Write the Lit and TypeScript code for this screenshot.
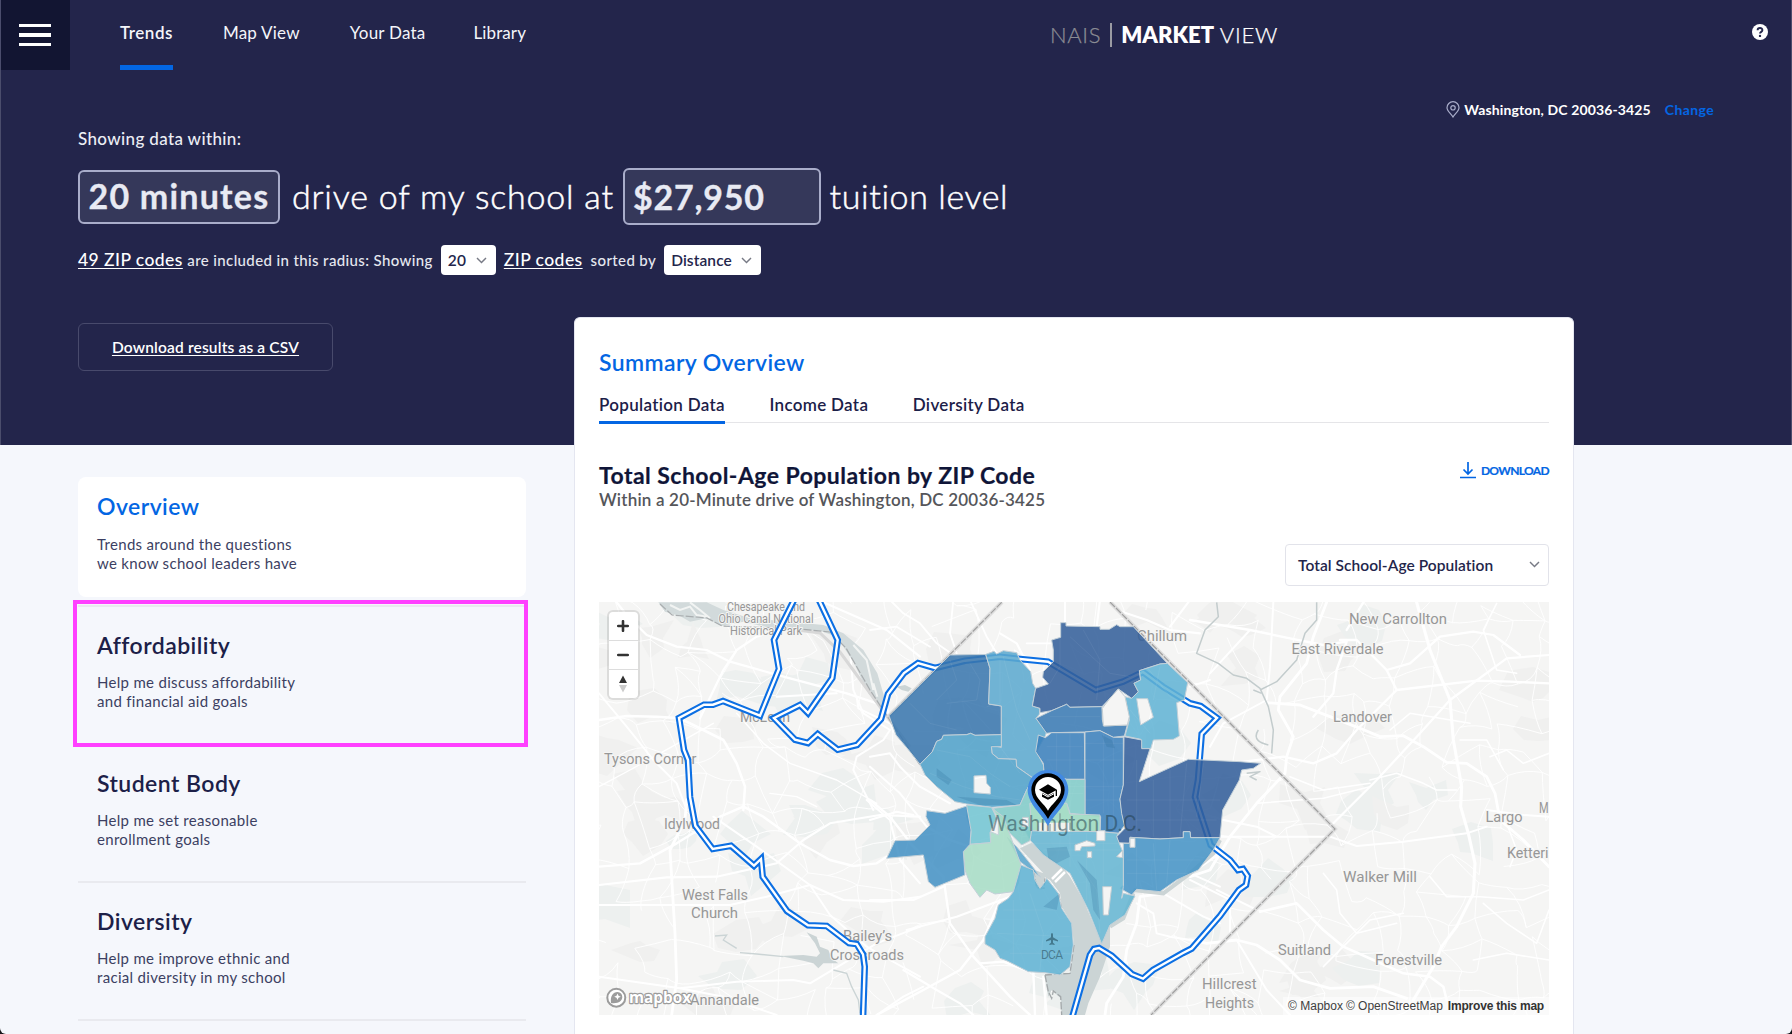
import { LitElement, html, css, svg } from "lit";
import { customElement } from "lit/decorators.js";

const chevron = html`<svg class="chev" width="11" height="7" viewBox="0 0 11 7"><path d="M1 1l4.5 4.6L10 1" fill="none" stroke="#777a85" stroke-width="1.4"/></svg>`;

/* ---------- map ---------- */

// Street grid: a jittered lattice with random gaps, stable between renders.
function streets(): string {
  let s = 77;
  const rnd = () => ((s = (s * 16807) % 2147483647) / 2147483647);
  const step = 27;
  const cols = Math.ceil(950 / step) + 2;
  const rows = Math.ceil(413 / step) + 2;
  const pts: [number, number][][] = [];
  for (let r = 0; r < rows; r++) {
    pts.push([]);
    for (let c = 0; c < cols; c++) {
      pts[r].push([590 + c * step + (rnd() - 0.5) * 24, 594 + r * step + (rnd() - 0.5) * 24]);
    }
  }
  let d = "";
  const seg = (a: [number, number], b: [number, number]) => {
    const mx = (a[0] + b[0]) / 2 + (rnd() - 0.5) * 12;
    const my = (a[1] + b[1]) / 2 + (rnd() - 0.5) * 12;
    d += `M${a[0].toFixed(1)} ${a[1].toFixed(1)}Q${mx.toFixed(1)} ${my.toFixed(1)} ${b[0].toFixed(1)} ${b[1].toFixed(1)}`;
  };
  for (let r = 0; r < rows; r++)
    for (let c = 0; c < cols; c++) {
      if (c + 1 < cols && rnd() < 0.66) seg(pts[r][c], pts[r][c + 1]);
      if (r + 1 < rows && rnd() < 0.66) seg(pts[r][c], pts[r + 1][c]);
      if (r + 1 < rows && c + 1 < cols && rnd() < 0.06) seg(pts[r][c], pts[r + 1][c + 1]);
    }
  return d;
}
const STREETS = streets();

// Soft terrain patches.
function patches() {
  let s = 991;
  const rnd = () => ((s = (s * 16807) % 2147483647) / 2147483647);
  return Array.from({ length: 80 }, () => {
    const x = 600 + rnd() * 950, y = 602 + rnd() * 413;
    let p = "";
    for (let i = 0; i < 8; i++) {
      const a = (i / 8) * 6.283, r = 6 + rnd() * 22;
      p += `${(x + Math.cos(a) * r * 1.3).toFixed(0)},${(y + Math.sin(a) * r).toFixed(0)} `;
    }
    return svg`<polygon points=${p} fill=${rnd() > 0.6 ? "#edf0ef" : "#f0f0ef"}/>`;
  });
}

const ISO = [
  "M795 598 774 640 779 669 760 715.7 723 701 713 704.7 704 704.7 679 718 684 750 688 760 690 797 695.3 825.7 712.7 849 731 845.7 754 865.7 761 859 762.7 876.7 787 911 808 925.3 826.7 926 849 943 856.7 944 863 954.3 864.7 966.7 863 1018",
  "M818 598 837.7 640 832.3 678 808 713 800 705 774 718 795 739.7 808 743 817.7 734 837.7 749.7 857 745 881 719 888 694 904 673 918 663 935 668 965 660.7 1000 656.7 1020 659 1048 661.7 1095.7 690 1123 681.7 1143 672 1163 686.7 1190 703.3 1200.7 706 1217 718 1201.7 734 1198 780 1195 797 1210.7 845 1230 860 1238 870 1243 869 1247.7 876 1246 885 1239 890 1220 916 1191.7 948.5 1183 953 1153 970 1143 978.7 1131.7 974 1111.7 955.7 1099 948 1094 949 1090 955 1072 1018",
];

// ZIP areas, drawn at three units per pixel from (870, 600).
const AREAS: [string, string][] = [
  ["#3a76ae", "M57 347 240 165 347 163 360 205 356 312 394 318V404L315 406 302 400 290 404 220 406 215 418 200 424 187 455 150 493 120 455 78 405Z"],
  ["#5ca9cf", "M347 163 372 154 380 162 400 152 440 158 450 180 482 215 488 250 497 265 487 318 510 325 508 343 498 355 530 395 526 408 500 455 522 498 520 535 490 535 440 500 438 478 385 476 366 460 364 436 394 442V318L356 312 360 205Z"],
  ["#345f9a", "M572 68H588V78L690 80V88H718L740 74 750 80H790L892 190 870 192 808 212 812 240 792 250 805 275 785 295 745 267 720 295 696 320 600 322 590 313 545 332 510 338 510 325 487 318 497 265 535 252 518 232 520 215 550 185V150L545 120 572 112Z"],
  ["#3a7ab3", "M498 355 545 332 590 313 600 322 696 320 697 360 702 378 772 375 763 408 730 412 690 392 645 396 545 398 530 400Z"],
  ["#62b3d4", "M892 190 953 248 943 300 920 308 928 408 910 418 850 420 842 446H815L813 418 765 408 778 360 765 290 785 295 805 275 792 250 812 240 808 212 870 192ZM800 296 812 375 850 352 833 296Z"],
  ["#3b80bb", "M545 398H643L645 538H590L522 515 520 490 497 455 505 405 526 413Z"],
  ["#3b80bb", "M645 396 690 392 730 412H760V555L750 598 757 645 765 675 745 700 690 695 692 650 645 645Z"],
  ["#325e9a", "M762 410 815 420V446H840L808 545 955 478 1110 485 1172 490 1150 505 1115 510 1108 540 1058 630 1050 713H962L960 695H940V713L870 717 780 712 778 730 745 728 740 710 765 685 755 640 750 597 760 555Z"],
  ["#4593c5", "M1050 713 1030 750 985 810 920 840 870 875 800 868 785 885 750 865 760 855V730H778L780 712 870 717 940 713V695H960L962 713Z"],
  ["#65b6d2", "M465 692 690 695 745 700 740 710 760 760V860L755 895 760 880 795 888 765 945 720 975 695 1032 655 930 600 820 520 765 480 720Z"],
  ["#5aa5cc", "M412 712 440 740 480 790 512 832 470 800 450 785Z"],
  ["#4fa1c9", "M150 493 187 455 200 424 215 418 220 406 290 404 302 400 315 406 394 404V440L364 440 366 460 385 476 438 478 440 500 490 535 470 570 450 615 365 622 290 612 255 605 200 560 165 525ZM312 528V578L361 582V562L350 550 348 526Z"],
  ["#7fcac8", "M490 535 590 538H645V645L600 640 590 610 480 610 485 692 480 722 455 735 410 690 370 625 450 615 470 570Z"],
  ["#9bd9c0", "M480 610H590L600 642 690 645V695L485 692Z"],
  ["#72c4d2", "M290 615 365 622 380 655 360 698 362 728 300 733 303 695 290 650Z"],
  ["#a6dcc6", "M300 733 362 728 362 695 385 705 385 655 366 625 400 650 453 795 445 850 430 875 375 882 350 870 330 892 300 850 285 810 280 755Z"],
  ["#4592c4", "M170 632 225 640 290 618 303 690 300 733 280 755 285 825 195 862 175 845 160 765 50 775 75 722 135 720 180 675 168 650Z"],
  ["#5fb2d3", "M453 795 490 810 495 840 510 865 525 845 530 835 565 880 575 925 605 970 610 1035 600 1100 570 1125 525 1118 475 1115 410 1082 390 1075 375 1050 345 1032V1010L375 955 385 915 415 895 430 875Z"],
];

// Larger roads: [origin x, origin y, width, path], three units per pixel.
const ROADS: [number, number, number, string][] = [
  [590, 590, 3.2, "M80 37 110 75 170 135 260 170 350 180 420 215 600 265 770 310 890 350 910 425"],
  [590, 590, 3.6, "M27 390 110 378 200 380 270 385 340 420 400 450 440 520 465 590 460 660"],
  [590, 590, 3.2, "M700 37 890 120 990 200M330 385 400 240 440 180 500 140 560 120"],
  [590, 590, 2.8, "M27 310 110 410 190 510 260 580 290 660M800 320 805 355 900 400M560 320 740 310"],
  [590, 590, 2.8, "M780 180 790 300 820 370 900 420 880 450 800 500 790 540 850 660"],
  [590, 590, 2, "M540 610 620 620 680 650M440 370 520 460 600 520 740 570 860 640M27 590 120 540 300 440 370 400"],
  [590, 800, 4, "M290 0 285 60 240 150 255 400 260 540 245 645"],
  [590, 800, 3.4, "M27 200 150 190 260 130 390 50 460 20 520 50 630 130 720 180 790 198 860 190 890 170"],
  [590, 800, 3, "M27 255 230 232 380 230 560 190 640 120 720 70 870 45 990 50"],
  [590, 800, 3, "M27 315H320L420 315 530 290 660 255 760 300 880 305 990 290"],
  [590, 800, 2.8, "M27 530 270 565 400 590 560 645M270 565 440 545 610 540 660 550 760 490 860 430 990 380"],
  [590, 800, 2.8, "M370 50 500 140 660 255 720 345 830 440 900 480 990 530M830 0 900 60 930 180 990 250"],
  [590, 800, 2.8, "M860 645 940 590 1000 560"],
  [870, 600, 2.6, "M60 0 100 40 150 70 200 130 300 200M250 0 240 100 260 160M300 0 350 110 380 160M0 90 80 80 180 140M470 130 550 130"],
  [870, 600, 3, "M390 100 440 130 480 210M585 0V70M690 0 680 80M740 30 830 60 900 90 990 100M960 0 900 80"],
  [870, 600, 3, "M0 470 60 460 90 500 150 560 240 610M0 500 90 580 170 680 240 720 300 740"],
  [870, 790, 3.4, "M0 30 60 80 130 170 220 260 240 400 310 500 420 620 480 675"],
  [870, 790, 3, "M0 90 80 65 130 75M0 330 130 330 220 290M110 420 260 380 420 320M100 540 200 600 270 640 310 675"],
  [870, 790, 3.4, "M20 675 160 600 270 540 340 450 390 330M330 520 400 515 480 545M490 545 495 675M520 560 530 675"],
  [870, 790, 4, "M1050 190 960 250 880 310 810 320 800 400 770 480 760 560 710 640 705 675"],
  [870, 790, 2.8, "M800 340 850 370 860 430 900 440 960 450M880 310 1000 380 1050 400M960 250 1050 290"],
  [1190, 590, 4.4, "M680 37 720 180 760 280 780 330 790 450 815 590 812 650 835 730 855 820 850 910 800 1010 755 1070 730 1130 670 1230"],
  [1190, 590, 4, "M770 517 830 520 890 560 915 610 930 690 1000 750 1077 830M770 517 700 470 640 437 570 440 510 415 420 380 330 345 230 338"],
  [1190, 590, 4, "M410 37 370 140 350 220 270 320 265 360 310 440 290 500 285 550 200 640 120 740 60 840 0 860"],
  [1190, 590, 3.4, "M120 520 280 500 370 520 440 490 500 420 620 300 590 240 500 150 450 150"],
  [1190, 590, 3.4, "M620 300 860 272 960 275 1077 280M0 90 180 120 300 145 400 165 470 155 440 240 430 310 370 380M520 37 470 120"],
  [1190, 590, 3.2, "M590 240 660 220 750 140 850 125 910 135 990 195M430 700 560 570 690 430 780 330 950 205 1077 195"],
  [1190, 590, 2.8, "M0 740H420L500 768 640 755 830 730 890 710M0 660 100 690 200 710 260 740M890 660 1000 675 1077 680"],
  [1190, 590, 3.6, "M210 965 320 940 400 1020 460 1070 550 1110 640 1150 720 1160 760 1190 770 1230"],
  [1190, 590, 4, "M0 1050 50 1060 140 1050 200 1065 270 1110 330 1170 420 1195 550 1190 650 1225"],
  [1190, 590, 2.8, "M140 1050 230 1200 300 1275M80 900 200 960M0 870 120 930 120 1030M60 270 0 290M180 120 60 250M250 37 240 230 230 330 100 400 60 470"],
  [1190, 590, 2.2, "M400 850 440 900 450 970 500 1030 620 1000M720 860 770 920 870 920 1000 930 1077 900M540 570 620 550 700 580 740 600 800 600M1077 490 1000 520 950 480 900 500"],
  [1190, 590, 2.2, "M400 1130 500 1030 540 990 640 970M600 420 660 370 840 400M300 560 400 600 540 580M200 640 400 625 540 590M920 40 880 120 920 240 980 250"],
  [1190, 590, 2.2, "M850 1110 950 1090 1077 1110M810 450 890 450 940 540M960 830 980 780 950 700M1077 960 1040 1060 950 1000 880 940"],
];

const LABELS: [string, number, number, number, number][] = [
  ["New Carrollton", 1349, 624, 98, 15.5], ["East Riverdale", 1291.5, 654, 92, 15.5], ["Landover", 1333, 722, 59, 15.5],
  ["Largo", 1485.5, 822, 37, 15.5], ["Walker Mill", 1343, 882, 74, 15.5], ["Suitland", 1278, 955, 53, 15.5],
  ["Forestville", 1375, 965, 67, 15.5], ["Hillcrest", 1202, 989, 54.5, 15.5], ["Heights", 1205, 1007.5, 49, 15.5],
  ["Chesapeake and", 727, 610.5, 78, 12], ["Ohio Canal National", 718.5, 622.5, 95, 12], ["Historical Park", 730, 634.5, 72, 12],
  ["McLean", 740, 721.5, 50, 15.5], ["Tysons Corner", 604, 764, 92.5, 15.5], ["Idylwood", 664, 828.5, 56, 15.5],
  ["West Falls", 682, 899.5, 66, 15.5], ["Church", 691, 918, 47, 15.5], ["Bailey’s", 843, 941, 49, 15.5],
  ["Crossroads", 830, 960, 74, 15.5], ["Annandale", 690, 1005, 69, 15.5], ["Chillum", 1137, 641, 50, 15.5],
  ["M", 1539, 813, 9.6, 15.5], ["Ketteri", 1507, 857.5, 41.5, 15.5],
];

const at = (x: number, y: number) => `translate(${x} ${y}) scale(.33333)`;

@customElement("zip-map")
export class ZipMap extends LitElement {
  static styles = css`
    :host { display: block; position: relative; height: 413px; overflow: hidden; }
    .canvas { display: block; }
    .lab { font-family: Roboto, "Liberation Sans", sans-serif; fill: #979797; paint-order: stroke; stroke: #f5f5f4; stroke-width: 2px; stroke-linejoin: round; }
    .city { font-family: Roboto, "Liberation Sans", sans-serif; fill: #1f3c48; fill-opacity: .5; }
    .ctl { position: absolute; left: 8px; top: 8px; border: 2px solid rgba(0,0,0,.1); border-radius: 6px; width: 28.5px; overflow: hidden; background: #fff; background-clip: padding-box; }
    .ctl span { display: flex; align-items: center; justify-content: center; height: 28px; }
    .ctl span + span { border-top: 1px solid #ddd; }
    .attr { position: absolute; right: 0; bottom: 0; padding: 0 5px; display: flex; gap: 3px; font: 12px/18px "Liberation Sans", Arial, sans-serif; color: #404040; background: rgba(255,255,255,.5); white-space: nowrap; }
    .attr b { color: #333; letter-spacing: -.2px; margin-left: 2px; }
    .logo { font-family: "Open Sans", sans-serif; font-weight: 700; fill: #fff; paint-order: stroke; stroke: #9c9c9c; stroke-width: 2.4px; stroke-linejoin: round; }
  `;
  render() {
    return html`
      <svg class="canvas" width="950" height="413" viewBox="599 602 950 413">
        <rect x="599" y="602" width="950" height="413" fill="#f5f5f4"/>
        ${patches()}
        <path d=${STREETS} fill="none" stroke="#fff" stroke-width="1" stroke-opacity=".9"/>
        <g fill="none" stroke="#fff" stroke-linecap="round" stroke-linejoin="round">
          ${ROADS.map(([x, y, w, d]) => svg`<path transform=${at(x, y)} d=${d} stroke-width=${w * 2.1}/>`)}
        </g>

        <g fill="#cbd4d5">
          <path transform=${at(590, 590)} d="M205 37 225 65 270 78 300 95 350 85 395 108 460 95 560 118 690 122 740 140 790 215 835 310 870 350 890 345 862 250 820 180 760 130 700 105 600 95 480 85 400 60 350 37Z" fill="#d2dadb"/>
          <path transform=${at(590, 590)} d="M240 45 270 60 300 50 320 75 350 80M300 37 330 60 360 85M790 165 830 210 850 300M850 280 862 320" fill="none" stroke="#f2f4f3" stroke-width="6"/>
          <path transform=${at(590, 590)} d="M920 290 945 285 965 295 955 305 935 300Z"/>
          <path transform=${at(590, 800)} d="M650 397 680 410 690 440 715 450 725 475 745 490 700 490 685 505 670 490 640 482 570 468 640 465 680 470 690 460 675 430Z"/>
          <path transform=${at(590, 800)} d="M375 408 410 405 400 420 440 445M450 458 500 462 580 470M730 510 770 520 785 560 805 600 810 640" fill="none" stroke="#cbd4d5" stroke-width="4"/>
          <path transform=${at(870, 790)} d="M450 175 485 158 580 235 600 260 640 330 695 460 720 405 720 470 690 560 655 640 645 675H575L572 625 545 600 535 620 525 555 600 550 612 465 605 400 575 350 570 310 540 270 525 262 515 300 500 295 490 240 455 225 520 250Z"/>
          <path transform=${at(870, 790)} d="M1050 150 1030 190 960 250 880 310 790 300M790 310 760 385 720 410" fill="none" stroke="#cbd4d5" stroke-width="12"/>
        </g>
        <path transform=${at(870, 790)} d="M525 555 535 605 545 625 550 603 572 620 575 675M612 465 600 550 525 555M490 240 500 292 522 295 525 265M565 310 575 355" fill="none" stroke="#a3a8aa" stroke-width="4" stroke-dasharray="22 6"/>
        <g fill="none" stroke="#c3cccd" stroke-width="4.5" stroke-linejoin="round">
          <path transform=${at(1190, 590)} d="M80 37 85 80 45 120 20 190 85 220 130 255 170 265 210 295 235 350 250 420 245 490M380 37V90L345 130 320 210 260 275 210 300"/>
          <path transform=${at(1190, 590)} d="M205 420C185 450 215 460 235 465M190 300 215 310M170 550 210 545 180 560 200 570"/>
        </g>
        <path d="M1052 879 1062 869M1055 882 1065 872" fill="none" stroke="#fff" stroke-width="2.5"/>
        <g fill="none">
          <path d="M910 747 886 715 840 652 820 633 797 630" stroke="#d8d8d8" stroke-width="3"/>
          <path d="M660 604 672 615 707 618 722 626 800 629 830 632 846 648 870 690 885 713 920 765" stroke="#a9adaf" stroke-width="1.2" stroke-dasharray="8 2"/>
          <path d="M889 716 1002 602M1110 602 1335 829 1151 1015" stroke="#dedede" stroke-width="4"/>
          <path d="M889 716 1002 602M1110 602 1335 829 1151 1015" stroke="#a0a0a0" stroke-width="1.2" stroke-dasharray="7 1.5"/>
        </g>

        <g>${LABELS.map(([t, x, y, w, s]) => svg`<text class="lab" x=${x} y=${y} font-size=${s} textLength=${w} lengthAdjust="spacingAndGlyphs">${t}</text>`)}</g>

        <g fill="none" stroke-linejoin="miter">
          ${ISO.map((d) => svg`<path d=${d} stroke="#0c6fe3" stroke-width="6.6"/><path d=${d} stroke="#fff" stroke-width="2.4"/>`)}
        </g>

        <g transform=${at(870, 600)} fill-rule="evenodd" stroke="#c3d0d8" stroke-width="3" stroke-linejoin="round">
          ${AREAS.map(([c, d]) => svg`<path d=${d} fill=${c} fill-opacity=".87"/>`)}
        </g>
        <g transform=${at(870, 600)} fill="none" stroke="#fff" stroke-opacity=".06" stroke-width="3">
          <path d="M390 180V310L350 320M400 170 440 330 480 420M300 190 330 240 320 300 230 310M120 310 180 370 260 390M240 180 260 240 200 300M570 90V200L540 250M640 90 690 180 680 300M600 110 720 220 780 230M540 350 690 350M560 400V530M600 400V530M530 440H640M530 480H760M645 430H760M700 400V640M730 415V690M645 560H760M645 600H750M180 520 280 560 380 590 450 600M200 450 300 470 360 520 420 560M390 440 450 520M800 480V700M850 540V710M900 510V710M950 490 930 710M770 600H1050M790 660H1040M1000 490 980 650M800 740V860M850 730 860 870M900 720 890 850M770 780H990M770 820H960M480 730H750M520 750H750M600 700V800M650 700V900M700 700V860M620 780 680 870 690 1000M430 900V1100M400 930 560 930M480 880 520 1000 510 1110M380 1000 600 1010M420 1060 600 1060M540 560H645M560 540V650M600 540V640M500 580H640M830 200 900 290 920 300M780 330 840 400M870 200 850 300"/>
        </g>
        <g transform=${at(870, 600)} fill="#2f6f9d" fill-opacity=".25">
          <path d="M200 505 245 540 235 555 200 530ZM260 590 410 600 440 615 330 615ZM695 405 725 420 735 445 710 440ZM620 780 680 840 690 960 670 930 660 850ZM530 745 590 740 600 770 560 790 535 775ZM520 920 570 880 560 930Z"/>
        </g>
        <g transform=${at(870, 600)} fill="#f5f5f4" stroke="#c3cdd2" stroke-width="3">
          <path d="M745 267 720 295 697 325 700 378 772 375 778 350 765 290Z"/>
          <path d="M680 692H705V722H680ZM780 715H795V742H780ZM652 755H665V773H652ZM615 735 650 722 675 730 675 738 635 740 630 752H615ZM740 770 757 752V773ZM698 860H725L715 945H700ZM458 652H475V680H458Z"/>
          <path d="M505 668H600V694H505Z" fill="#eef2ee" stroke="none"/><path d="M518 668V690M540 672V694M570 640V690M600 668V690" stroke="#758d8f"/>
        </g>
        <text class="city" x="988" y="830.5" font-size="21.5" textLength="154" lengthAdjust="spacingAndGlyphs">Washington D.C.</text>
        <path d="M1052 933c.8 0 1 1 1 2v2.2l5 3v1.4l-5-1.6v2.8l1.6 1.3v1l-2.6-.7-2.6.7v-1l1.6-1.3V940l-5 1.6v-1.4l5-3V935c0-1 .2-2 1-2z" fill="#44798e"/>
        <text class="city" x="1041" y="958.5" font-size="12" textLength="22">DCA</text>

        <g transform=${at(870, 600)}>
          <path d="M534 678C518 645 473 612 473 570A61 61 0 0 1 595 570C595 612 550 645 534 678Z" fill="#4189e2"/>
          <path d="M534 657C520 628 484 604 484 570A50 50 0 0 1 584 570C584 604 548 628 534 657Z" fill="#000"/>
          <path d="M534 632C524 612 495 596 495 570A39 39 0 0 1 573 570C573 596 544 612 534 632Z" fill="#fff"/>
          <path d="M507 569 534 553 561 569 534 584ZM516 578 534 588 552 578V590L534 599 516 590ZM557 570H561V588H557Z" fill="#000"/>
          <path d="M516 581 534 591 552 581" stroke="#fff" stroke-width="3" fill="none"/>
        </g>

        <circle cx="616.3" cy="997.7" r="9" fill="#fff" stroke="#9c9c9c" stroke-width="2"/>
        <path d="M611 1003c-1-7 2-11 6.500-11a5.200 5.200 0 0 1 4.800 5c0 4-4.300 7-11.300 6z" fill="#9c9c9c"/>
        <path d="M617.500 993.500l1 2.300 2.300 1-2.300 1-1 2.300-1-2.300-2.300-1 2.300-1z" fill="#fff"/>
        <text class="logo" x="629" y="1002.5" font-size="16" textLength="62" lengthAdjust="spacingAndGlyphs">mapbox</text>
      </svg>
      <div class="ctl">
        <span><svg width="12" height="12"><path d="M6 1.200V10.800M1.200 6H10.800" stroke="#333" stroke-width="2.600" stroke-linecap="round"/></svg></span>
        <span><svg width="12" height="12"><path d="M1.200 6H10.800" stroke="#333" stroke-width="2.600" stroke-linecap="round"/></svg></span>
        <span><svg width="10" height="18"><path d="M1 8 5 .5 9 8Z" fill="#333"/><path d="M1 10 5 17.500 9 10Z" fill="#ccc"/></svg></span>
      </div>
      <div class="attr"><span>© Mapbox</span><span>© OpenStreetMap</span><b>Improve this map</b></div>`;
  }
}

/* ---------- page ---------- */

const TOPICS = [
  { t: "Overview", a: "Trends around the questions", b: "we know school leaders have", on: true },
  { t: "Affordability", a: "Help me discuss affordability", b: "and financial aid goals", mark: true },
  { t: "Student Body", a: "Help me set reasonable", b: "enrollment goals" },
  { t: "Diversity", a: "Help me improve ethnic and", b: "racial diversity in my school" },
];

@customElement("app-root")
export class AppRoot extends LitElement {
  static styles = css`
    :host { display: block; width: 1792px; height: 1034px; background: #16161a; font-family: Lato, "Open Sans", sans-serif; color: #1c2048; white-space: nowrap; }
    * { box-sizing: border-box; }
    .page { height: 1034px; overflow: hidden; background: #f5f7fc; border-radius: 0 0 6px 6px; }
    .hero { height: 445px; background: #23254b; color: #fff; border-left: 1px solid #4b4d6c; border-right: 1px solid #4b4d6c; }
    header { display: flex; height: 70px; }
    .burger { width: 69px; height: 70px; padding-right: 2px; background: #121532; display: flex; flex-direction: column; align-items: center; justify-content: center; gap: 6px; }
    .burger i { width: 32px; height: 3.5px; background: #fff; }
    nav { display: flex; gap: 50px; padding-left: 50px; width: 980px; }
    nav a { height: 70px; padding-top: 22px; font-size: 17px; line-height: 22px; letter-spacing: .23px; border-bottom: 5px solid transparent; color: #f4f5fa; }
    nav a:last-child { margin-left: -2px; letter-spacing: .1px; }
    nav a.on { font-weight: 600; letter-spacing: .5px; border-color: #0366e3; }
    .brand { display: flex; align-items: center; font-size: 22px; font-weight: 300; height: 70px; line-height: 26px; letter-spacing: .8px; -webkit-text-stroke: .25px currentColor; }
    .brand .n { color: #8b8c94; letter-spacing: .65px; }
    .brand .bar { width: 1.5px; height: 24px; background: #9a9ba3; margin: 0 9.5px 0 9px; }
    .brand b { font-weight: 800; margin-right: 5.5px; letter-spacing: .05px; -webkit-text-stroke: 0; }
    .help { margin-left: auto; padding: 24px 23px 0 0; }
    .loc { display: flex; justify-content: flex-end; align-items: center; height: 18px; margin-top: 30px; padding-right: 77px; font-size: 14px; font-weight: 700; letter-spacing: .13px; }
    .loc svg { margin-right: 4px; }
    .loc a { color: #0366e3; margin-left: 14px; letter-spacing: .38px; }
    .filters { padding-left: 77px; }
    .within { font-size: 17px; line-height: 22px; font-weight: 500; color: #eceef5; margin-top: 10px; letter-spacing: .36px; }
    .big { display: flex; align-items: center; font-size: 34px; line-height: 42px; font-weight: 300; margin-top: 18px; height: 57px; -webkit-text-stroke: .5px #fff; }
    .box { border: 2px solid #a9adca; border-radius: 6px; background: #35385a; color: #e8eaf3; font-weight: 700; padding: 0 8.5px; height: 54px; line-height: 48px; width: 202px; letter-spacing: 1.2px; -webkit-text-stroke: .3px #e8eaf3; }
    .box.m { width: 198px; height: 57px; line-height: 53px; padding-left: 8px; letter-spacing: .8px; }
    .big .t1 { width: 343px; padding: 0 0 2px 12px; letter-spacing: .8px; }
    .big .t2 { padding: 0 0 2px 8.5px; letter-spacing: .6px; }
    .zips { display: flex; align-items: center; height: 30px; margin-top: 20px; font-size: 15px; font-weight: 500; color: #e6e8f0; letter-spacing: .38px; }
    .zips u { font-size: 17.5px; letter-spacing: .43px; color: #fff; text-underline-offset: 2px; text-decoration-thickness: 1px; padding-bottom: 2px; }
    .zips .inc { margin: 0 8px 0 4.5px; }
    .zips .codes { margin: 0 8px; }
    .zips .by { margin-right: 8px; }
    .pick { display: flex; align-items: center; justify-content: space-between; background: #fff; color: #23254b; border-radius: 4px; height: 30px; padding: 0 9px 0 7px; font-size: 15.5px; font-weight: 600; letter-spacing: .1px; width: 55px; }
    .pick.wide { width: 97px; }
    .csv { display: flex; align-items: center; justify-content: center; width: 255px; height: 48px; margin-top: 48px; border: 1px solid #484a6c; border-radius: 6px; padding-bottom: 1px; font-size: 15.5px; font-weight: 600; letter-spacing: .17px; text-decoration: underline; text-underline-offset: 2px; text-decoration-thickness: 1px; }
    .main { display: flex; margin-top: -128px; padding-left: 78px; }
    aside { width: 448px; margin-top: 160px; margin-right: 48px; }
    .topic { position: relative; height: 138px; padding: 22.5px 19px 0; border-top: 2px solid #e9eaef; }
    .topic.on { height: 120px; margin-bottom: 8px; background: #fff; border: 0; border-radius: 8px; padding-top: 14px; }
    .topic h3 { margin: 0; font-size: 23px; line-height: 30px; font-weight: 600; letter-spacing: .45px; }
    .topic.on h3 { color: #0366e3; }
    .topic p { margin: 13.5px 0 0; font-size: 15px; line-height: 19px; color: #3c3f62; letter-spacing: .31px; }
    .mark { position: absolute; z-index: 1; left: -5px; top: -7px; width: 455px; height: 147px; border: 4px solid #ff40ff; }
    .marked { z-index: 1; }
    .card { width: 1000px; height: 717px; background: #fff; border: 1px solid #e4e6f0; border-bottom: 0; border-radius: 6px 6px 0 0; padding: 29px 24px 0; }
    .card h2 { margin: 0; color: #0366e3; font-size: 23px; line-height: 30px; font-weight: 600; letter-spacing: .38px; }
    .tabs { display: flex; gap: 44.5px; height: 46px; padding-top: 17px; border-bottom: 1px solid #e5e5e8; font-size: 17px; font-weight: 600; line-height: 22px; letter-spacing: .32px; }
    .tabs a { height: 30px; }
    .tabs a.on { border-bottom: 3px solid #0366e3; }
    .head { display: flex; justify-content: space-between; margin-top: 38px; }
    .head h1 { margin: 0; font-size: 23px; line-height: 28px; font-weight: 700; letter-spacing: .46px; color: #0f1538; -webkit-text-stroke: .2px #0f1538; }
    .head p { margin: 0; font-size: 17px; line-height: 22px; font-weight: 600; color: #55565a; letter-spacing: .19px; }
    .dl { display: flex; gap: 5px; height: 18px; align-items: center; font-size: 12px; font-weight: 700; letter-spacing: -.65px; color: #0366e3; -webkit-text-stroke: .2px #0366e3; }
    .sel { display: flex; align-items: center; justify-content: space-between; width: 264px; height: 42px; margin: 33px 0 16px auto; border: 1px solid #e2e3ea; border-radius: 4px; padding: 0 8px 1px 12px; font-size: 15.5px; font-weight: 600; letter-spacing: .06px; color: #23254b; }
  `;
  render() {
    return html`<div class="page">
      <section class="hero">
        <header>
          <div class="burger"><i></i><i></i><i></i></div>
          <nav><a class="on">Trends</a><a>Map View</a><a>Your Data</a><a>Library</a></nav>
          <div class="brand"><span class="n">NAIS</span><span class="bar"></span><b>MARKET</b><span>VIEW</span></div>
          <div class="help"><svg width="16" height="16"><circle cx="8" cy="8" r="8" fill="#fff"/><path d="M5.600 6.300C5.600 3.300 10.400 3.300 10.400 6.200 10.400 7.800 8 7.900 8 9.500" fill="none" stroke="#23254b" stroke-width="1.900"/><circle cx="8" cy="11.900" r="1.200" fill="#23254b"/></svg></div>
        </header>
        <div class="loc">
          <svg width="14" height="17" viewBox="0 0 14 17"><path d="M7 16C5 12.500 1 10 1 6.700a6 6 0 0 1 12 0C13 10 9 12.500 7 16Z" fill="none" stroke="#a9adca" stroke-width="1.200"/><circle cx="7" cy="6.800" r="2.200" fill="none" stroke="#a9adca" stroke-width="1.200"/></svg>
          <span>Washington, DC 20036-3425</span><a>Change</a>
        </div>
        <div class="filters">
          <div class="within">Showing data within:</div>
          <div class="big"><span class="box">20 minutes</span><span class="t1">drive of my school at</span><span class="box m">$27,950</span><span class="t2">tuition level</span></div>
          <div class="zips">
            <u>49 ZIP codes</u><span class="inc">are included in this radius: Showing</span>
            <span class="pick">20 ${chevron}</span>
            <u class="codes">ZIP codes</u><span class="by">sorted by</span>
            <span class="pick wide">Distance ${chevron}</span>
          </div>
          <div class="csv">Download results as a CSV</div>
        </div>
      </section>
      <div class="main">
        <aside>
          ${TOPICS.map((x) => html`<div class="topic ${x.on ? "on" : ""} ${x.mark ? "marked" : ""}"><h3>${x.t}</h3><p>${x.a}<br>${x.b}</p>${x.mark ? html`<div class="mark"></div>` : ""}</div>`)}
          <div class="topic"></div>
        </aside>
        <section class="card">
          <h2>Summary Overview</h2>
          <div class="tabs"><a class="on">Population Data</a><a>Income Data</a><a>Diversity Data</a></div>
          <div class="head">
            <div><h1>Total School-Age Population by ZIP Code</h1><p>Within a 20-Minute drive of Washington, DC 20036-3425</p></div>
            <div class="dl"><svg width="16" height="17"><path d="M8 0V11.500M3.500 7.500 8 12 12.500 7.500M0 15.500H16" fill="none" stroke="#0366e3" stroke-width="1.700"/></svg>DOWNLOAD</div>
          </div>
          <div class="sel">Total School-Age Population ${chevron}</div>
          <zip-map></zip-map>
        </section>
      </div>
    </div>`;
  }
}
